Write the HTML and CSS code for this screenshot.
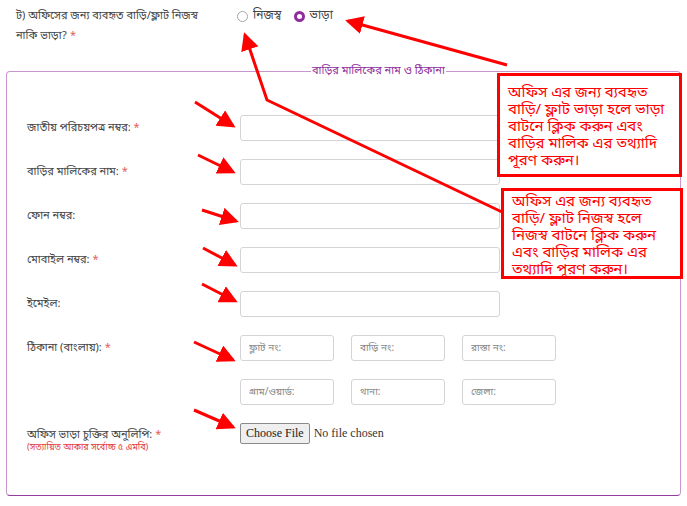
FILE: index.html
```html
<!DOCTYPE html>
<html lang="bn">
<head>
    <meta charset="UTF-8">
    <meta name="viewport" content="width=device-width, initial-scale=1.0">
    <title>বাড়ির মালিকের তথ্য</title>
    <link rel="stylesheet" href="styles.css">
</head>
<body>
    <div class="page">
        <div class="question">
            <div class="question-text">ট) অফিসের জন্য ব্যবহৃত বাড়ি/ফ্লাট নিজস্ব নাকি ভাড়া? <span class="req">*</span></div>
            <div class="radios">
                <label class="radio"><input type="radio" name="own" value="own"> নিজস্ব</label>
                <label class="radio"><input type="radio" name="own" value="rent" checked> ভাড়া</label>
            </div>
        </div>

        <fieldset class="owner">
            <legend>বাড়ির মালিকের নাম ও ঠিকানা</legend>

            <div class="row">
                <label for="nid">জাতীয় পরিচয়পত্র নম্বর: <span class="req">*</span></label>
                <input type="text" id="nid" class="field">
            </div>
            <div class="row">
                <label for="name">বাড়ির মালিকের নাম: <span class="req">*</span></label>
                <input type="text" id="name" class="field">
            </div>
            <div class="row">
                <label for="phone">ফোন নম্বর:</label>
                <input type="text" id="phone" class="field">
            </div>
            <div class="row">
                <label for="mobile">মোবাইল নম্বর: <span class="req">*</span></label>
                <input type="text" id="mobile" class="field">
            </div>
            <div class="row">
                <label for="email">ইমেইল:</label>
                <input type="text" id="email" class="field">
            </div>
            <div class="row row-top">
                <label>ঠিকানা (বাংলায়): <span class="req">*</span></label>
                <div class="address">
                    <input type="text" class="small-field" placeholder="ফ্লাট নং:">
                    <input type="text" class="small-field" placeholder="বাড়ি নং:">
                    <input type="text" class="small-field" placeholder="রাস্তা নং:">
                    <input type="text" class="small-field" placeholder="গ্রাম/ওয়ার্ড:">
                    <input type="text" class="small-field" placeholder="থানা:">
                    <input type="text" class="small-field" placeholder="জেলা:">
                </div>
            </div>
            <div class="row row-file">
                <div class="file-label">
                    <label for="deed">অফিস ভাড়া চুক্তির অনুলিপি: <span class="req">*</span></label>
                    <div class="hint">(সত্যায়িত আকার সর্বোচ্চ ৫ এমবি)</div>
                </div>
                <input type="file" id="deed" class="file">
            </div>
        </fieldset>

        <!-- annotation arrows drawn over the form -->
        <svg class="arrows" width="687" height="506" viewBox="0 0 687 506">
            <defs>
                <marker id="head" markerWidth="6" markerHeight="6" refX="5" refY="3" orient="auto" markerUnits="strokeWidth">
                    <path d="M0,0 L6,3 L0,6 Z" fill="#f00"/>
                </marker>
            </defs>
            <g stroke="#f00" stroke-width="3" fill="none">
                <line x1="195" y1="102" x2="233" y2="126" marker-end="url(#head)"/>
                <line x1="198" y1="155" x2="233" y2="172" marker-end="url(#head)"/>
                <line x1="202" y1="210" x2="236" y2="221" marker-end="url(#head)"/>
                <line x1="203" y1="248" x2="235" y2="265" marker-end="url(#head)"/>
                <line x1="202" y1="284" x2="235" y2="301" marker-end="url(#head)"/>
                <line x1="194" y1="342" x2="233" y2="360" marker-end="url(#head)"/>
                <line x1="194" y1="410" x2="233" y2="427" marker-end="url(#head)"/>
                <line x1="507" y1="65" x2="348" y2="21" marker-end="url(#head)"/>
                <polyline points="502,212 267,100 245,35" marker-end="url(#head)"/>
            </g>
        </svg>

        <div class="note note-rent">অফিস এর জন্য ব্যবহৃত<br>বাড়ি/ ফ্লাট ভাড়া হলে ভাড়া<br>বাটনে  ক্লিক করুন এবং<br>বাড়ির মালিক এর তথ্যাদি<br>পূরণ করুন।</div>
        <div class="note note-own">অফিস এর জন্য ব্যবহৃত<br>বাড়ি/ ফ্লাট নিজস্ব হলে<br>নিজস্ব বাটনে ক্লিক করুন<br>এবং বাড়ির মালিক এর<br>তথ্যাদি পূরণ করুন।</div>
    </div>
</body>
</html>
```

FILE: styles.css
```css
body {
    margin: 0;
    background-color: #fff;
    font-family: "Noto Sans Bengali", "Vrinda", "Noto Sans", sans-serif;
    color: #444;
}
.page {
    position: relative;
    width: 687px;
    height: 506px;
    padding: 6px 6px 0 6px;
    box-sizing: border-box;
}
.req {
    color: #e35d5d;
}
.question {
    display: grid;
    grid-template-columns: 221px 1fr;
    padding-left: 10px;
    font-size: 11px;
    line-height: 20px;
}
.question-text {
    width: 190px;
}
.radios {
    display: flex;
    gap: 12px;
}
.radio {
    display: flex;
    align-items: center;
    gap: 5px;
    height: 20px;
    font-size: 12px;
}
.radio input {
    appearance: none;
    margin: 0;
    width: 11px;
    height: 11px;
    box-sizing: border-box;
    border: 1px solid #a8a8a8;
    border-radius: 50%;
    background-color: #fff;
}
.radio input:checked {
    border: 3px solid #8e2e9c;
}
.owner {
    margin: 18px 0 0 0;
    padding: 37px 20px 20px 20px;
    height: 432px;
    width: 675px;
    box-sizing: border-box;
    border: 1px solid #c895cf;
    border-bottom-color: #933d9f;
    border-radius: 4px;
}
.owner legend {
    margin-left: 284px;
    padding: 0 1px;
    font-size: 11px;
    color: #8e2e9c;
}
.row {
    display: grid;
    grid-template-columns: 213px 260px;
    align-items: center;
    margin-bottom: 18px;
    font-size: 11px;
}
.row-top {
    align-items: start;
}
.row-top > label {
    line-height: 26px;
}
.row-file {
    align-items: start;
}
.file-label {
    margin-top: 5px;
}
.hint {
    font-size: 9px;
    color: #e33c3c;
    margin-top: 0;
}
.field {
    height: 26px;
    width: 260px;
    box-sizing: border-box;
    border: 1px solid #d4d4d8;
    border-radius: 3px;
    padding: 0 8px;
}
.address {
    display: grid;
    grid-template-columns: 94px 94px 94px;
    column-gap: 17px;
    row-gap: 18px;
    width: 320px;
}
.small-field {
    height: 26px;
    width: 94px;
    box-sizing: border-box;
    border: 1px solid #d4d4d8;
    border-radius: 3px;
    padding: 0 8px;
    font-family: inherit;
    font-size: 10px;
}
.small-field::placeholder {
    color: #888;
}
.file {
    font-family: "Liberation Serif", serif;
    font-size: 12px;
    color: #333;
    width: 260px;
}
.file::file-selector-button {
    font-family: "Liberation Serif", serif;
    font-size: 12px;
    height: 21px;
    padding: 0 5px;
    margin-right: 4px;
    background-color: #efefef;
    border: 1px solid #8a8a8a;
    border-radius: 2px;
    color: #222;
}
.arrows {
    position: absolute;
    left: 0;
    top: 0;
    pointer-events: none;
}
.note {
    position: absolute;
    background-color: #fff;
    border: 3px solid #f00;
    box-sizing: border-box;
    color: #f00;
    font-size: 15px;
    line-height: 17px;
    padding: 9px 4px 0 8px;
    white-space: nowrap;
}
.note-rent {
    left: 497px;
    top: 73px;
    width: 185px;
    height: 104px;
}
.note-own {
    left: 501px;
    top: 188px;
    width: 182px;
    height: 91px;
    padding-top: 3px;
}
```
